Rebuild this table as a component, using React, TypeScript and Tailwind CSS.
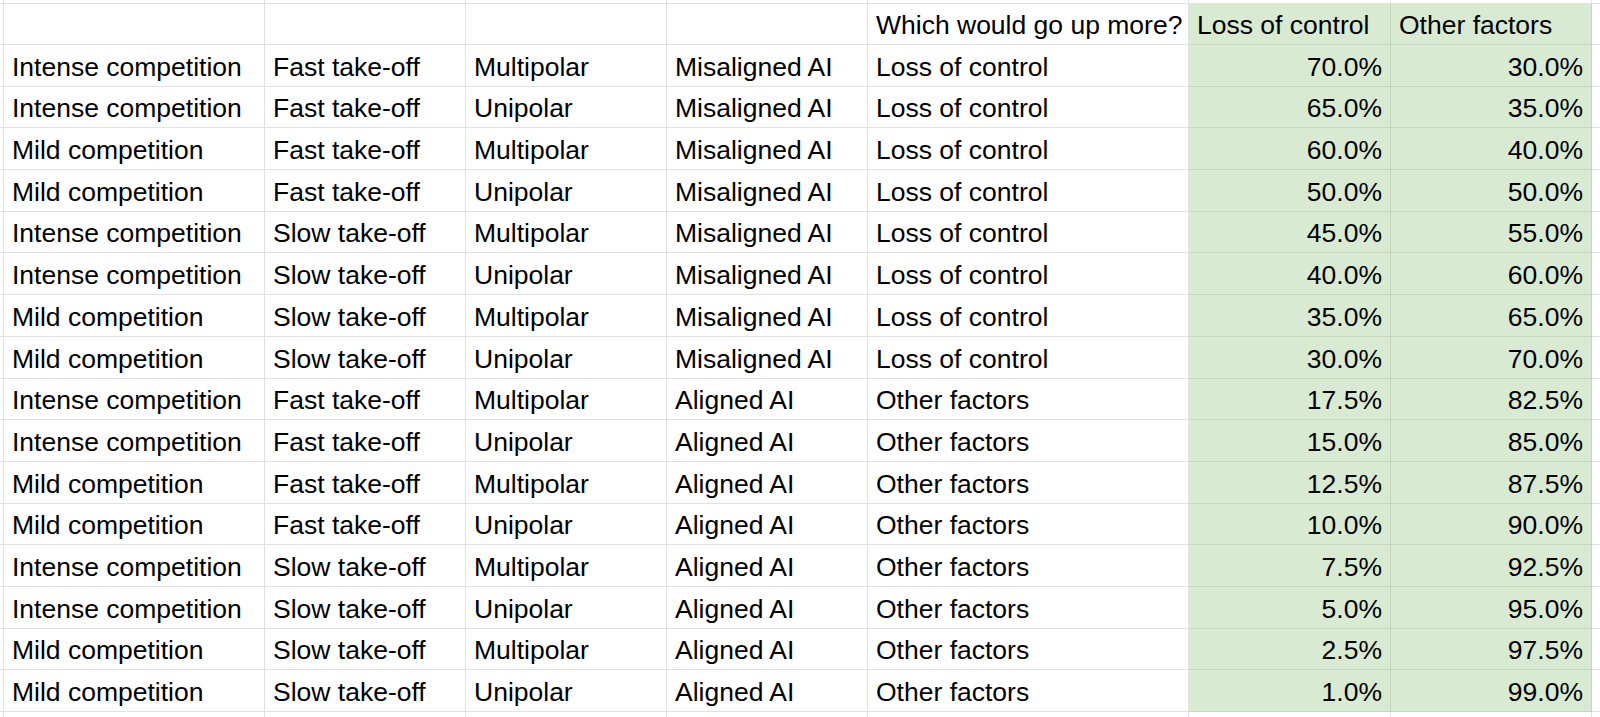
import React from 'react';

type Row = [string, string, string, string, string, string, string];

const rows: Row[] = [
  ['Intense competition', 'Fast take-off', 'Multipolar', 'Misaligned AI', 'Loss of control', '70.0%', '30.0%'],
  ['Intense competition', 'Fast take-off', 'Unipolar', 'Misaligned AI', 'Loss of control', '65.0%', '35.0%'],
  ['Mild competition', 'Fast take-off', 'Multipolar', 'Misaligned AI', 'Loss of control', '60.0%', '40.0%'],
  ['Mild competition', 'Fast take-off', 'Unipolar', 'Misaligned AI', 'Loss of control', '50.0%', '50.0%'],
  ['Intense competition', 'Slow take-off', 'Multipolar', 'Misaligned AI', 'Loss of control', '45.0%', '55.0%'],
  ['Intense competition', 'Slow take-off', 'Unipolar', 'Misaligned AI', 'Loss of control', '40.0%', '60.0%'],
  ['Mild competition', 'Slow take-off', 'Multipolar', 'Misaligned AI', 'Loss of control', '35.0%', '65.0%'],
  ['Mild competition', 'Slow take-off', 'Unipolar', 'Misaligned AI', 'Loss of control', '30.0%', '70.0%'],
  ['Intense competition', 'Fast take-off', 'Multipolar', 'Aligned AI', 'Other factors', '17.5%', '82.5%'],
  ['Intense competition', 'Fast take-off', 'Unipolar', 'Aligned AI', 'Other factors', '15.0%', '85.0%'],
  ['Mild competition', 'Fast take-off', 'Multipolar', 'Aligned AI', 'Other factors', '12.5%', '87.5%'],
  ['Mild competition', 'Fast take-off', 'Unipolar', 'Aligned AI', 'Other factors', '10.0%', '90.0%'],
  ['Intense competition', 'Slow take-off', 'Multipolar', 'Aligned AI', 'Other factors', '7.5%', '92.5%'],
  ['Intense competition', 'Slow take-off', 'Unipolar', 'Aligned AI', 'Other factors', '5.0%', '95.0%'],
  ['Mild competition', 'Slow take-off', 'Multipolar', 'Aligned AI', 'Other factors', '2.5%', '97.5%'],
  ['Mild competition', 'Slow take-off', 'Unipolar', 'Aligned AI', 'Other factors', '1.0%', '99.0%'],
];

// column widths incl. right border
const widths = ['w-[261px]', 'w-[201px]', 'w-[201px]', 'w-[201px]', 'w-[321px]', 'w-[202px]', 'w-[201px]'];

const Cell = ({
  text,
  idx,
  green,
  right,
}: {
  text: string;
  idx: number;
  green?: boolean;
  right?: boolean;
}) => (
  <div
    className={`${widths[idx]} shrink-0 h-full flex items-end px-[8px] pb-[4px] border-r border-b overflow-visible whitespace-nowrap leading-[30px] ${
      green ? 'bg-[#d9ead3] border-[#c6d5c0]' : 'border-[#e2e2e2]'
    } ${right ? 'justify-end' : 'justify-start'}`}
  >
    {text}
  </div>
);

const Gutter = () => <div className="w-[4px] shrink-0 h-full border-r border-b border-[#e2e2e2]" />;

const App = () => {
  return (
    <div
      className="w-[1600px] h-[717px] overflow-hidden bg-white text-black text-[26.5px]"
      style={{ fontFamily: '"Liberation Sans", Arial, sans-serif' }}
    >
      {/* previous row peeking in */}
      <div className="flex h-[4px]">
        <Gutter />
        {widths.map((_, i) => (
          <div key={i} className={`${widths[i]} shrink-0 h-full border-r border-b border-[#e2e2e2]`} />
        ))}
        <div className="flex-1 border-b border-[#e2e2e2]" />
      </div>

      {/* header row */}
      <div className="flex h-[41px]">
        <Gutter />
        <Cell text="" idx={0} />
        <Cell text="" idx={1} />
        <Cell text="" idx={2} />
        <Cell text="" idx={3} />
        <Cell text="Which would go up more?" idx={4} />
        <Cell text="Loss of control" idx={5} green />
        <Cell text="Other factors" idx={6} green />
        <div className="flex-1 flex items-end pl-[8px] pb-[4px] leading-[30px] border-b border-[#e2e2e2] whitespace-nowrap overflow-hidden">
          L
        </div>
      </div>

      {rows.map((r, ri) => (
        <div key={ri} className="flex h-[41.69px]">
          <Gutter />
          {r.map((t, ci) => (
            <Cell key={ci} text={t} idx={ci} green={ci >= 5} right={ci >= 5} />
          ))}
          <div className="flex-1 border-b border-[#e2e2e2]" />
        </div>
      ))}

      <div className="flex h-[10px]">
        <Gutter />
        {widths.map((_, i) => (
          <div key={i} className={`${widths[i]} shrink-0 h-full border-r border-[#e2e2e2]`} />
        ))}
      </div>
    </div>
  );
};

export default App;
